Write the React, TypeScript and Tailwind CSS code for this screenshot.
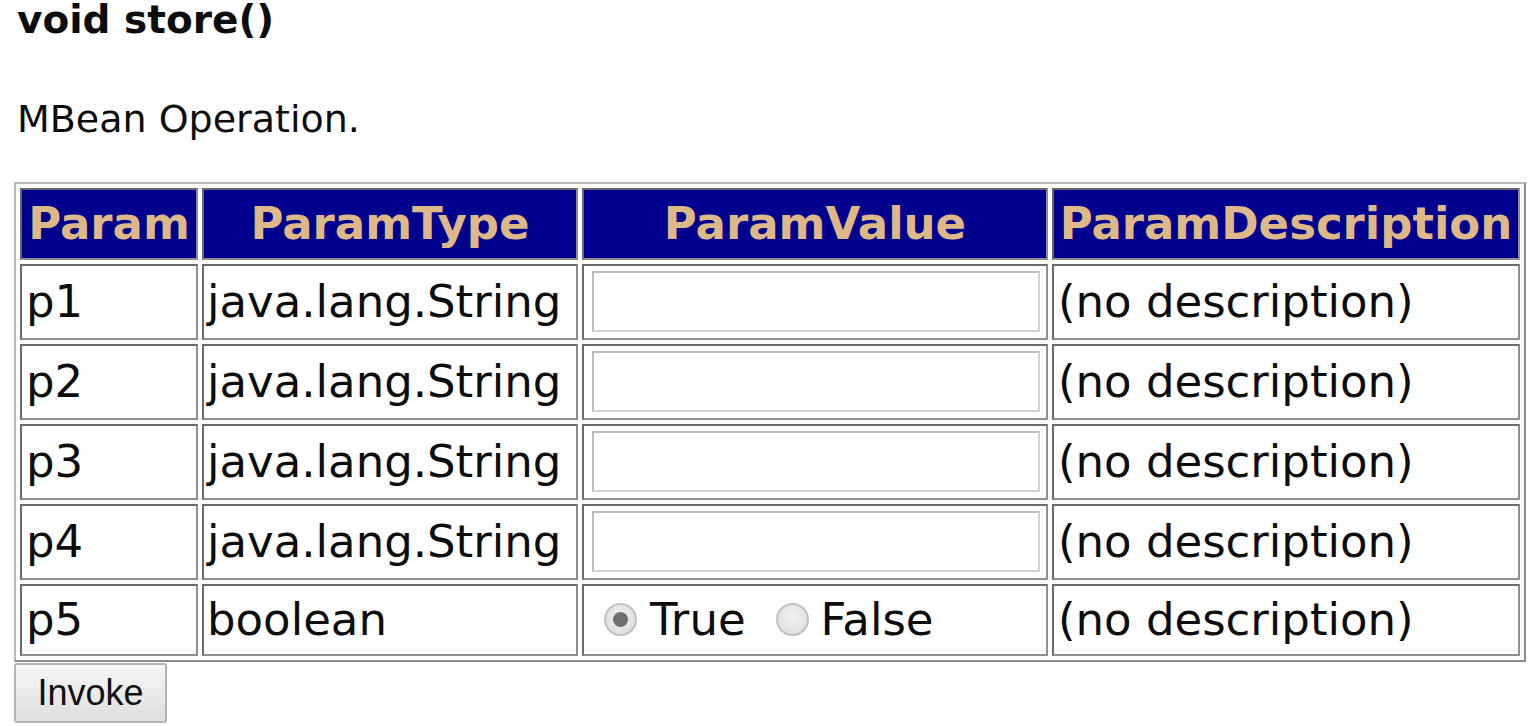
import React from "react";

type Param = {
  name: string;
  type: string;
  kind: "text" | "boolean";
};

const params: Param[] = [
  { name: "p1", type: "java.lang.String", kind: "text" },
  { name: "p2", type: "java.lang.String", kind: "text" },
  { name: "p3", type: "java.lang.String", kind: "text" },
  { name: "p4", type: "java.lang.String", kind: "text" },
  { name: "p5", type: "boolean", kind: "boolean" },
];

function Radio({ checked }: { checked: boolean }) {
  return (
    <span className="flex h-[33px] w-[33px] shrink-0 items-center justify-center rounded-full border-2 border-[#c2c2c2] bg-[radial-gradient(circle_at_50%_40%,#f2f2f2,#d9d9d9)]">
      {checked && <span className="block h-[15px] w-[15px] rounded-full bg-[#6f6f6f]" />}
    </span>
  );
}

const cellBorder =
  "border-2 border-t-[#6a6a6a] border-l-[#6a6a6a] border-r-[#8e8e8e] border-b-[#8e8e8e]";

export default function App() {
  return (
    <div className="min-h-[726px] bg-white pl-[14px] text-[#0d0d0d] font-['DejaVu_Sans',Verdana,sans-serif]">
      <h3 className="m-0 pl-[3px] pt-[1px] text-[39px] font-bold leading-[38px]">void store()</h3>
      <p className="mt-[59px] pl-[3px] text-[38px] leading-[42px]">MBean Operation.</p>

      <form className="mt-[42px]">
        <table className="table-fixed w-[1512px] border-separate border-spacing-[4px] border-2 border-t-[#b8b8b8] border-l-[#b8b8b8] border-r-[#8c8c8c] border-b-[#8c8c8c] text-[45px]">
          <thead>
            <tr>
              <th className={`h-[69px] w-[178px] bg-[#00008f] px-[2px] font-bold text-[#deb887] whitespace-nowrap ${cellBorder}`}>
                Param
              </th>
              <th className={`h-[69px] w-[376px] bg-[#00008f] px-[4px] font-bold text-[#deb887] ${cellBorder}`}>
                ParamType
              </th>
              <th className={`h-[69px] w-[466px] bg-[#00008f] px-[4px] font-bold text-[#deb887] ${cellBorder}`}>
                ParamValue
              </th>
              <th className={`h-[69px] w-[468px] bg-[#00008f] px-[2px] font-bold text-[#deb887] whitespace-nowrap ${cellBorder}`}>
                ParamDescription
              </th>
            </tr>
          </thead>
          <tbody>
            {params.map((p) => {
              const h = p.kind === "text" ? "h-[76px]" : "h-[72px]";
              return (
                <tr key={p.name}>
                  <td className={`${h} px-[4px] align-middle whitespace-nowrap ${cellBorder}`}>{p.name}</td>
                  <td className={`${h} px-[3px] align-middle whitespace-nowrap ${cellBorder}`}>{p.type}</td>
                  <td className={`${h} px-[4px] align-middle ${cellBorder}`}>
                    {p.kind === "text" ? (
                      <input
                        type="text"
                        name={p.name}
                        className="ml-[4px] block h-[61px] w-[448px] border-2 border-t-[#bdbdbd] border-l-[#bdbdbd] border-r-[#d2d2d2] border-b-[#d2d2d2] bg-white outline-none"
                      />
                    ) : (
                      <div className="flex items-center pl-[16px] whitespace-nowrap">
                        <Radio checked />
                        <span className="ml-[13px]">True</span>
                        <span className="ml-[30px]">
                          <Radio checked={false} />
                        </span>
                        <span className="ml-[12px]">False</span>
                      </div>
                    )}
                  </td>
                  <td className={`${h} px-[4px] align-middle whitespace-nowrap ${cellBorder}`}>(no description)</td>
                </tr>
              );
            })}
          </tbody>
        </table>
        <button
          type="button"
          className="mt-[1px] flex h-[60px] w-[153px] items-center justify-center rounded-[3px] border-2 border-[#b4b4b4] bg-[linear-gradient(#f7f7f7,#dedede)] text-[36px] text-[#111] font-['Liberation_Sans',Arial,sans-serif]"
        >
          Invoke
        </button>
      </form>
    </div>
  );
}
